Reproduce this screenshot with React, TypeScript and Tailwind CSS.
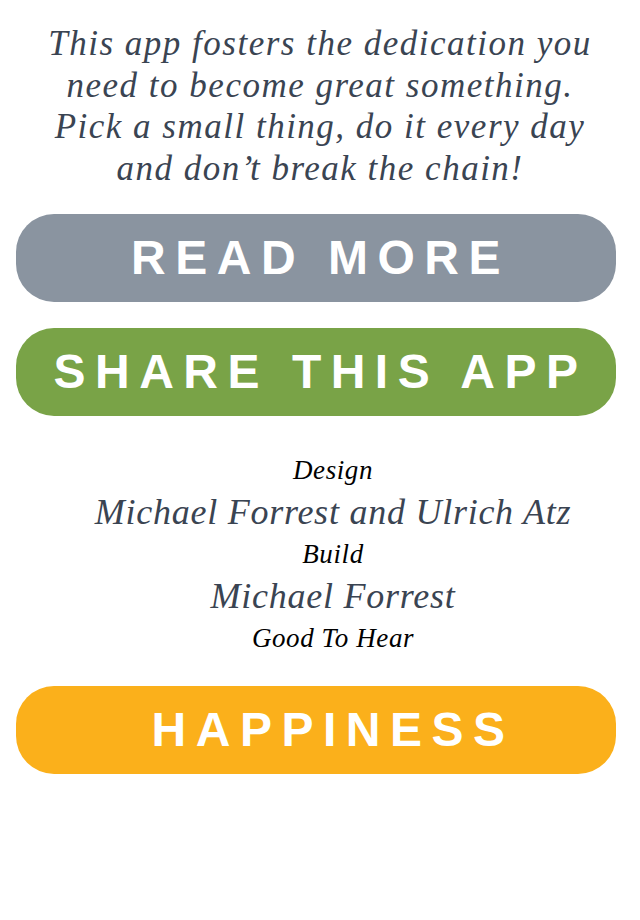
const serif = "font-['Liberation_Serif',_'DejaVu_Serif',_serif] italic";
const sans = "font-['Liberation_Sans',_Arial,_sans-serif] font-bold";

function PillButton({
  label,
  color,
  shift = "pl-[9px]",
}: {
  label: string;
  color: string;
  shift?: string;
}) {
  return (
    <div
      role="button"
      className={`ml-4 w-[600px] h-[88px] rounded-[38px] flex items-center justify-center select-none ${color}`}
    >
      <span
        className={`${sans} text-white text-[48px] leading-none tracking-[9.5px] whitespace-nowrap ${shift}`}
      >
        {label}
      </span>
    </div>
  );
}

export default function App() {
  return (
    <div className="w-[640px] h-[920px] bg-white pt-[23px]">
      <p
        className={`${serif} text-[35px] leading-[41.5px] tracking-[1.5px] text-[#3a4452] text-center`}
      >
        This app fosters the dedication you
        <br />
        need to become great something.
        <br />
        Pick a small thing, do it every day
        <br />
        and don’t break the chain!
      </p>

      <div className="mt-[25px] flex flex-col gap-[26px]">
        <PillButton label="READ MORE" color="bg-[#8a94a0]" />
        <PillButton label="SHARE THIS APP" color="bg-[#79a347]" />
      </div>

      <div
        className={`${serif} mt-[33px] pl-[26px] flex flex-col items-center leading-[42px]`}
      >
        <div className="text-[27px] tracking-[0.6px] text-black h-[42px]">
          Design
        </div>
        <div className="text-[36px] tracking-[0.75px] text-[#3a4452] h-[42px]">
          Michael Forrest and Ulrich Atz
        </div>
        <div className="text-[27px] tracking-[0.6px] text-black h-[42px]">
          Build
        </div>
        <div className="text-[36px] tracking-[0.75px] text-[#3a4452] h-[42px]">
          Michael Forrest
        </div>
        <div className="text-[27px] tracking-[0.6px] text-black h-[42px]">
          Good To Hear
        </div>
      </div>

      <div className="mt-[27px]">
        <PillButton label="HAPPINESS" color="bg-[#fbb01b]" shift="pl-[34px]" />
      </div>
    </div>
  );
}
